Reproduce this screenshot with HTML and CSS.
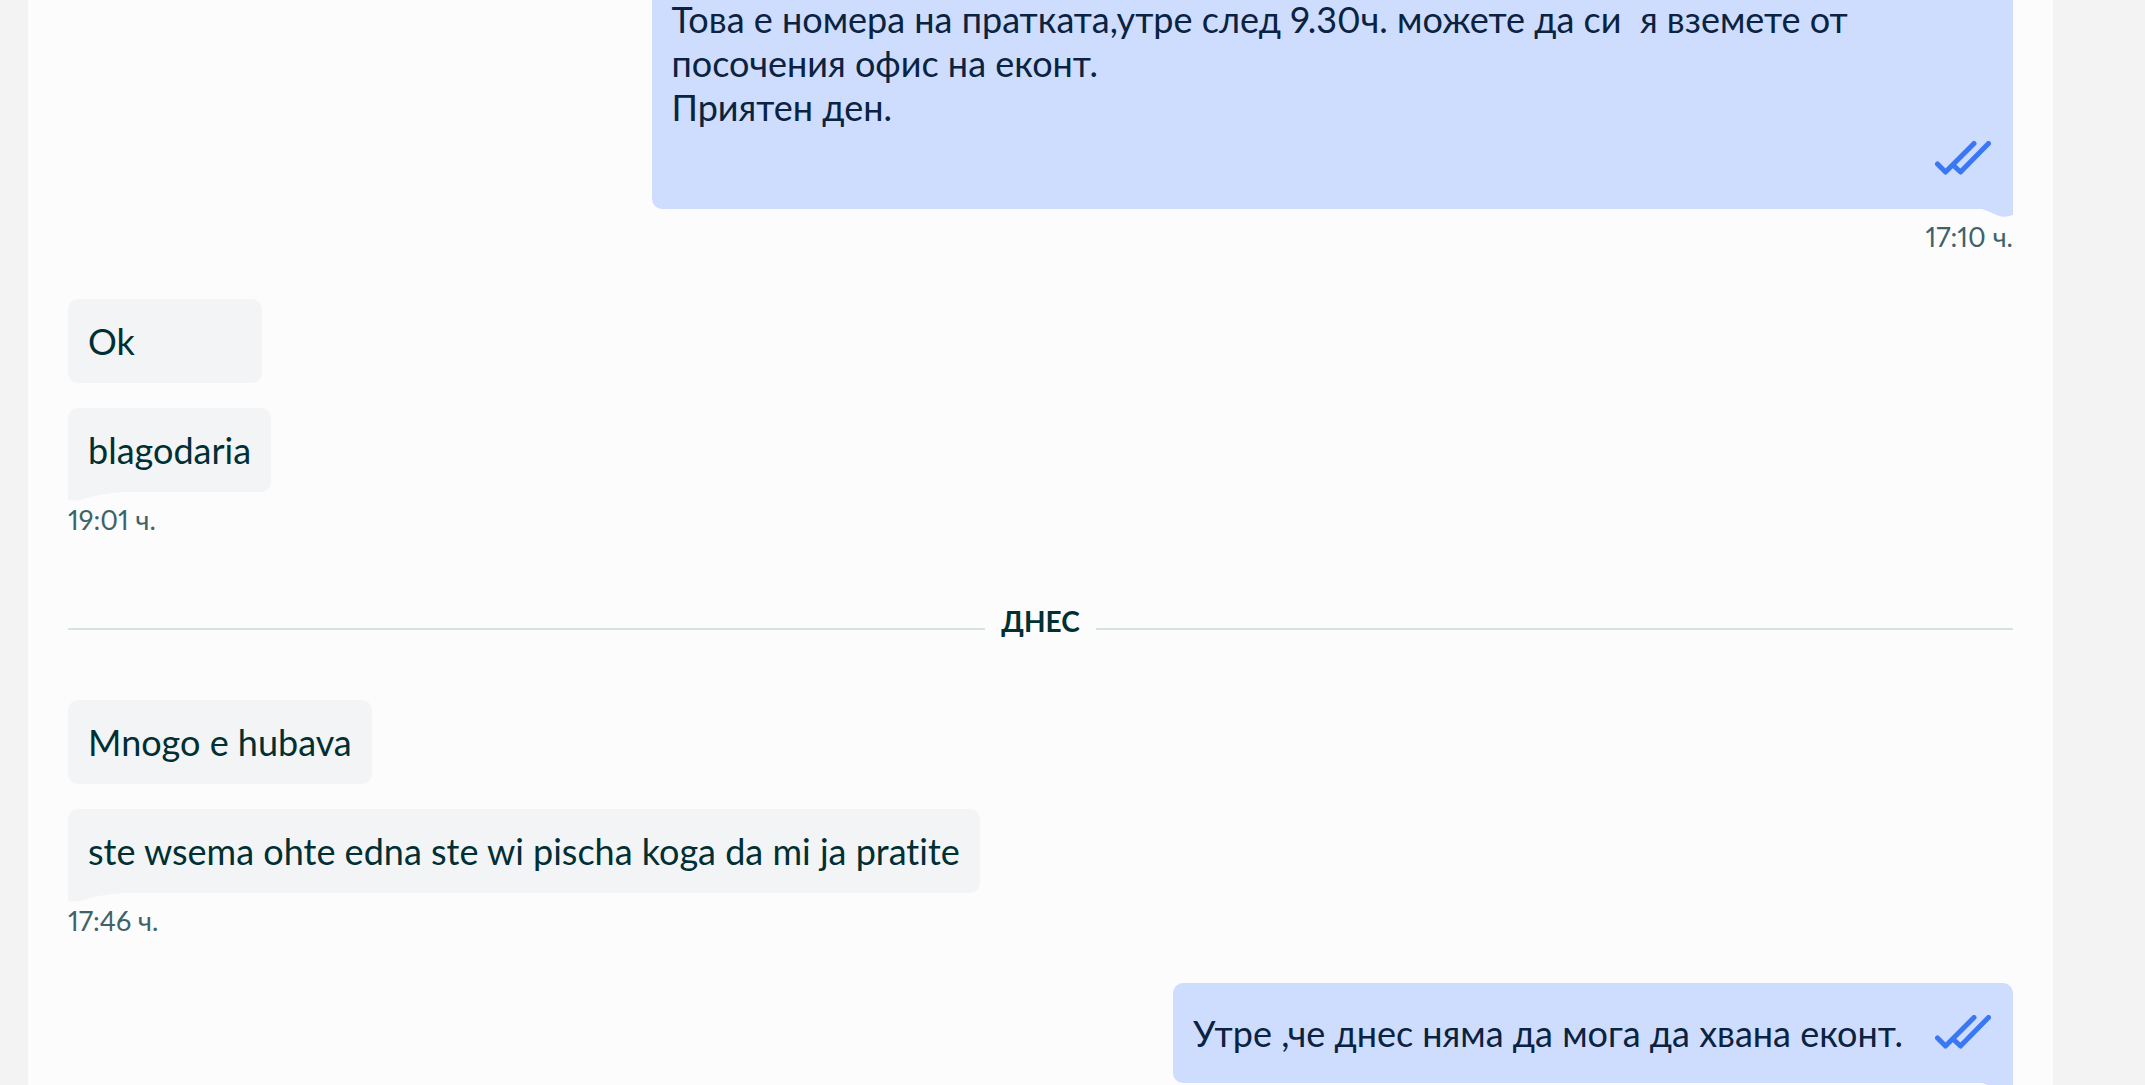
FILE: index.html
```
<!DOCTYPE html>
<html lang="bg">
<head>
  <meta charset="UTF-8">
  <title>Съобщения</title>
  <meta name="viewport" content="width=device-width, initial-scale=1.0">
  <link rel="stylesheet" href="styles.css">
</head>
<body>
  <main class="chat">
    <section class="group sent">
      <div class="bubble long last">
        <p class="text">Това е номера на пратката,утре след 9.30ч. можете да си  я вземете от посочения офис на еконт.
Приятен ден.</p>
        <svg class="check" viewBox="0 0 56 34" role="img" aria-label="Прочетено">
          <path d="M2.5 23 L10.5 31 L39 2.5 M18 24 L25.5 31 L53.5 2.5"/>
        </svg>
        <svg class="tail" viewBox="0 0 32 8"><path d="M0 0 H32 V6 Q24 9 18 7 L4 1 Q2 0 0 0 Z"/></svg>
      </div>
      <time class="time">17:10 ч.</time>
    </section>

    <section class="group received">
      <div class="bubble"><p class="text">Ok</p></div>
      <div class="bubble last">
        <p class="text">blagodaria</p>
        <svg class="tail" viewBox="0 0 54 9"><path d="M0 0 H54 Q30 2 16 7 Q6 10 0 8 Z"/></svg>
      </div>
      <time class="time">19:01 ч.</time>
    </section>

    <div class="day"><span>ДНЕС</span></div>

    <section class="group received">
      <div class="bubble"><p class="text">Mnogo e hubava</p></div>
      <div class="bubble last">
        <p class="text">ste wsema ohte edna ste wi pischa koga da mi ja pratite</p>
        <svg class="tail" viewBox="0 0 54 9"><path d="M0 0 H54 Q30 2 16 7 Q6 10 0 8 Z"/></svg>
      </div>
      <time class="time">17:46 ч.</time>
    </section>

    <section class="group sent">
      <div class="bubble last">
        <p class="text">Утре ,че днес няма да мога да хвана еконт.</p>
        <svg class="check" viewBox="0 0 56 34" role="img" aria-label="Прочетено">
          <path d="M2.5 23 L10.5 31 L39 2.5 M18 24 L25.5 31 L53.5 2.5"/>
        </svg>
        <svg class="tail" viewBox="0 0 32 8"><path d="M0 0 H32 V6 Q24 9 18 7 L4 1 Q2 0 0 0 Z"/></svg>
      </div>
    </section>
  </main>
</body>
</html>
```
FILE: styles.css
```
* { box-sizing: border-box; }
html, body { height: 100%; }
body {
  margin: 0;
  overflow: hidden;
  background: #f3f3f3;
  color: #002f34;
  font-family: Lato, "Open Sans", sans-serif;
  font-size: 36px;
  font-variant-ligatures: none;
  font-variant-numeric: proportional-nums;
  line-height: 44px;
}
.chat {
  height: 100%;
  overflow: hidden;
  margin: 0 92px 0 28px;
  padding: 0 40px;
  background: #fcfcfd;
}
.group {
  display: flex;
  flex-direction: column;
  align-items: flex-start;
  margin-bottom: 42px;
}
.group.sent { align-items: flex-end; }
.group:last-child { margin-bottom: 0; }
.bubble {
  position: relative;
  display: flex;
  align-items: center;
  min-width: 194px;
  max-width: 70%;
  margin-bottom: 25px;
  padding: 20px;
  border-radius: 10px;
  background: #f3f4f6;
}
.sent .bubble {
  padding: 28px 20px;
  background: #cedcfe;
  color: #0a2340;
}
/* first message is scrolled partly out of view */
.sent .long {
  margin-top: -31px;
  padding-bottom: 80px;
}
.bubble.last {
  margin-bottom: 8px;
  border-bottom-left-radius: 0;
}
.sent .bubble.last { border-radius: 10px 10px 0 10px; }
.text {
  margin: 0;
  white-space: pre-wrap;
}
.sent .text { padding-right: 90px; }
.check {
  position: absolute;
  right: 22px;
  bottom: 34px;
  width: 56px;
  height: 34px;
  fill: none;
  stroke: #3a77f5;
  stroke-width: 5;
  stroke-linecap: round;
  stroke-linejoin: round;
}
.tail {
  position: absolute;
  top: 100%;
  left: 0;
  width: 54px;
  height: 9px;
  fill: #f3f4f6;
}
.sent .tail {
  left: auto;
  right: 0;
  width: 32px;
  height: 8px;
  fill: #cedcfe;
}
.time {
  color: #406367;
  font-size: 27px;
  line-height: 40px;
}
.day {
  display: flex;
  align-items: center;
  gap: 16px;
  margin: 62px 0 60px;
  font-size: 28px;
  font-weight: bold;
  line-height: 38px;
}
.day::before,
.day::after {
  content: "";
  flex: 1;
  margin-top: 16px;
  border-top: 2px solid #d5e3e2;
}
```
